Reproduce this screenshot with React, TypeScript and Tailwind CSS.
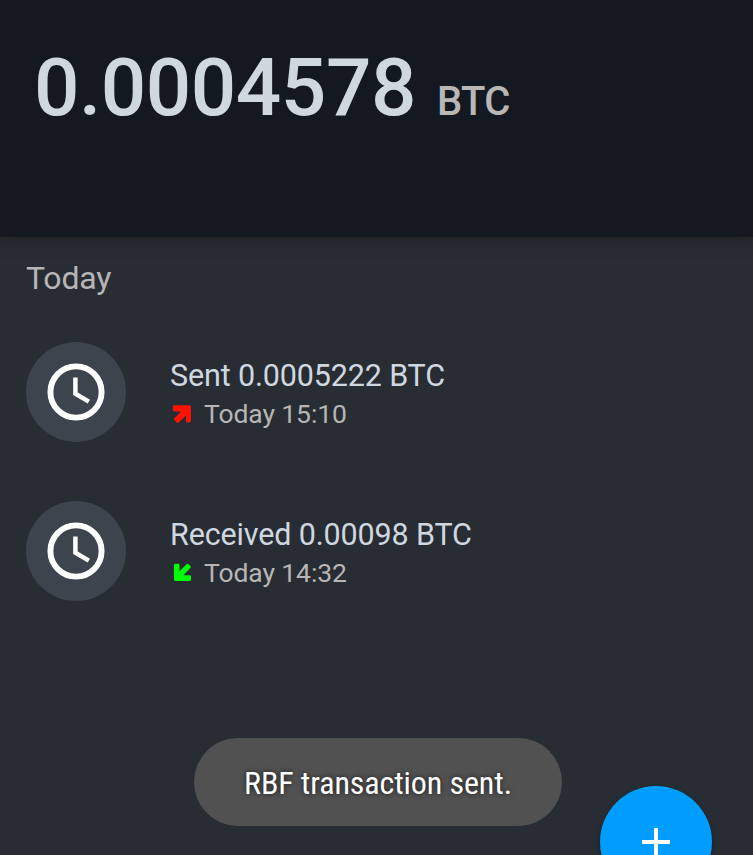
type Transaction = {
  title: string;
  time: string;
  direction: 'out' | 'in';
};

const transactions: Transaction[] = [
  { title: 'Sent 0.0005222 BTC', time: 'Today 15:10', direction: 'out' },
  { title: 'Received 0.00098 BTC', time: 'Today 14:32', direction: 'in' },
];

function ClockIcon() {
  return (
    <svg viewBox="0 0 58 58" className="h-[58px] w-[58px]" fill="none" stroke="#fff">
      <circle cx="29" cy="29" r="25.6" strokeWidth="5.9" />
      <path d="M28.400 14.600v16l13.400 8" strokeWidth="4.5" />
    </svg>
  );
}

function ArrowIcon({ direction }: { direction: 'out' | 'in' }) {
  return direction === 'out' ? (
    <svg viewBox="0 0 20 20" className="ml-[1.5px] h-5 w-5 shrink-0" fill="#ff1200">
      <path d="M2.200 1.300H17a1.900 1.900 0 0 1 1.900 1.900v13.600a1.600 1.600 0 0 1-1.600 1.600h-1.800a1.500 1.500 0 0 1-1.500-1.500v-5.300l-7.300 6.800q-1 .9-2 0L2.400 16.200q-.9-1 0-2l6.700-6.700H2.200A1.200 1.200 0 0 1 1 6.300V2.500a1.200 1.200 0 0 1 1.200-1.200z" />
    </svg>
  ) : (
    <svg viewBox="0 0 20 20" className="ml-[1.5px] h-5 w-5 shrink-0" fill="#0f0">
      <path d="M3.500 .8h2.600a1.400 1.400 0 0 1 1.400 1.400v6l7-6.900q1-.9 2 0l1.900 1.800q.9 1 0 2l-7 7.100h6.200a1.400 1.400 0 0 1 1.400 1.400v2.900a1.400 1.400 0 0 1-1.400 1.400H3.500a1.600 1.600 0 0 1-1.600-1.600V2.400A1.600 1.600 0 0 1 3.500 .8z" />
    </svg>
  );
}

function TransactionRow({ title, time, direction }: Transaction) {
  return (
    <li className="flex h-[159px] items-start">
      <div className="flex h-[100px] w-[100px] shrink-0 items-center justify-center rounded-full bg-[#3d444d]">
        <ClockIcon />
      </div>
      <div className="ml-11 pt-4">
        <p className="text-[30.5px] leading-[36px] tracking-[-0.15px] text-[#cfd8e0]">{title}</p>
        <div className="mt-1 flex h-8 items-center">
          <ArrowIcon direction={direction} />
          <span className="ml-[12.5px] text-[26.5px] leading-8 tracking-[-0.1px] text-[#b8b6b5]">{time}</span>
        </div>
      </div>
    </li>
  );
}

export default function App() {
  return (
    <main className="relative flex h-[855px] w-[753px] flex-col overflow-hidden bg-[#282c33] font-['Roboto',sans-serif] whitespace-nowrap">
      <header className="flex h-[237px] shrink-0 items-baseline bg-[#141820] px-[34px] pt-12 shadow-[0_2px_14px_rgba(30,30,30,0.8)]">
        <span className="text-[80px] leading-[80px] font-medium tracking-[-0.45px] text-[#cfd8df]">0.0004578</span>
        <span className="ml-[21px] text-[40px] leading-[40px] font-medium tracking-[-0.6px] text-[#b9b7b6]">BTC</span>
      </header>
      <section className="px-[26px] pt-[22px]">
        <h2 className="text-[32px] leading-[38px] tracking-[-0.2px] text-[#b8b6b5]">Today</h2>
        <ul className="mt-[45px]">
          {transactions.map((transaction) => (
            <TransactionRow key={transaction.title} {...transaction} />
          ))}
        </ul>
      </section>
      <div className="absolute top-[738px] left-[194px] flex h-[88px] w-[368px] items-center justify-center rounded-full bg-[#515151] pt-0.5">
        <span className="text-[32px] leading-[38px] tracking-[-0.1px] text-white [font-family:'Roboto_Condensed','Roboto',sans-serif] [font-stretch:75%] [text-shadow:0_0_5px_rgba(0,0,0,0.7)]">
          RBF transaction sent.
        </span>
      </div>
      <button
        aria-label="Add"
        className="absolute top-[786px] left-[600px] flex h-28 w-28 items-center justify-center rounded-full bg-[#009dff] shadow-[0_2px_6px_rgba(0,0,0,0.25)]"
      >
        <svg viewBox="0 0 28 28" className="h-7 w-7" fill="#fff">
          <path d="M12 0h4v12h12v4H16v12h-4V16H0v-4h12z" />
        </svg>
      </button>
    </main>
  );
}
